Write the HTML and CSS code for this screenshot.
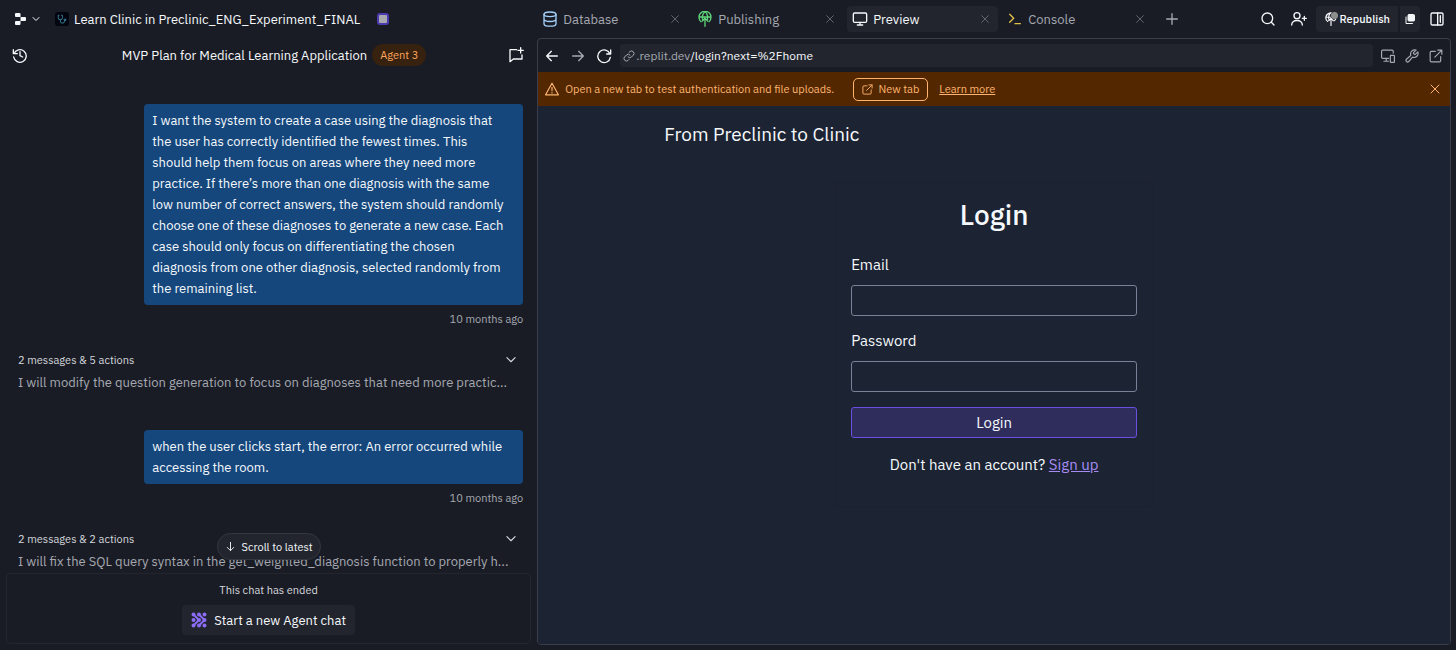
FILE: index.html
```html
<!DOCTYPE html>
<html lang="en">
<head>
    <meta charset="UTF-8">
    <title>Learn Clinic in Preclinic_ENG_Experiment_FINAL</title>
    <link rel="stylesheet" href="styles.css">
</head>
<body>
    <!-- Left side: project title and agent chat -->
    <section class="chat">
        <header class="topbar">
            <button class="icon-btn logo-btn" aria-label="Menu">
                <svg width="11" height="12" viewBox="0 0 11 12" fill="#f5f9fc"><path d="M1 0h3.5a1 1 0 0 1 1 1v3H1a1 1 0 0 1-1-1V1a1 1 0 0 1 1-1zM5.5 4H10a1 1 0 0 1 1 1v2a1 1 0 0 1-1 1H5.500zM1 8h4.500v3a1 1 0 0 1-1 1H1a1 1 0 0 1-1-1V9a1 1 0 0 1 1-1z"/></svg>
                <svg width="12" height="12" viewBox="0 0 24 24" class="line"><path d="M6 9l6 6 6-6"/></svg>
            </button>
            <span class="app-icon">
                <svg width="10" height="10" viewBox="0 0 24 24" class="line cyan"><path d="M5 3H3v6a5 5 0 0 0 10 0V3h-2M8 14v3a5 5 0 0 0 10 0v-1"/><circle cx="19" cy="14" r="2"/></svg>
            </span>
            <h1 class="app-name">Learn Clinic in Preclinic_ENG_Experiment_FINAL</h1>
            <span class="status-dot"></span>
        </header>

        <div class="chat-head">
            <button class="icon-btn" aria-label="History">
                <svg width="16" height="16" viewBox="0 0 24 24" class="line"><path d="M2 4v6h6M3 10a9.500 9.500 0 1 1-.5 5M12 7v6l4 2"/></svg>
            </button>
            <div class="chat-title">
                <h2>MVP Plan for Medical Learning Application</h2>
                <span class="badge">Agent 3</span>
            </div>
            <button class="icon-btn" aria-label="New chat">
                <svg width="16" height="16" viewBox="0 0 24 24" class="line"><path d="M13 4H3v18l5-4h13v-6M19 1v8M15 5h8"/></svg>
            </button>
        </div>

        <div class="messages">
            <div class="bubble">I want the system to create a case using the diagnosis that the user has correctly identified the fewest times. This should help them focus on areas where they need more practice. If there’s more than one diagnosis with the same low number of correct answers, the system should randomly choose one of these diagnoses to generate a new case. Each case should only focus on differentiating the chosen diagnosis from one other diagnosis, selected randomly from the remaining list.</div>
            <time class="time">10 months ago</time>
            <button class="group">
                <span class="group-head">2 messages &amp; 5 actions
                    <svg width="14" height="14" viewBox="0 0 24 24" class="line"><path d="M5 8l7 7 7-7"/></svg>
                </span>
                <span class="group-text">I will modify the question generation to focus on diagnoses that need more practic...</span>
            </button>
            <div class="bubble">when the user clicks start, the error: An error occurred while accessing the room.</div>
            <time class="time">10 months ago</time>
            <button class="group">
                <span class="group-head">2 messages &amp; 2 actions
                    <svg width="14" height="14" viewBox="0 0 24 24" class="line"><path d="M5 8l7 7 7-7"/></svg>
                </span>
                <span class="group-text">I will fix the SQL query syntax in the get_weighted_diagnosis function to properly h...</span>
            </button>
        </div>

        <footer class="ended">
            <button class="scroll-btn">
                <svg width="11" height="11" viewBox="0 0 24 24" class="line"><path d="M12 3v18M5 14l7 7 7-7"/></svg>
                Scroll to latest
            </button>
            <p>This chat has ended</p>
            <button class="start-btn">
                <svg width="16" height="16" viewBox="0 0 16 16"><g fill="#8b6cf5"><circle cx="2.500" cy="2.500" r="2"/><circle cx="8" cy="2.500" r="2"/><circle cx="13.500" cy="2.500" r="2"/><circle cx="2.500" cy="8" r="2"/><circle cx="8" cy="8" r="2"/><circle cx="13.500" cy="8" r="2"/><circle cx="2.500" cy="13.500" r="2"/><circle cx="8" cy="13.500" r="2"/><circle cx="13.500" cy="13.500" r="2"/></g><path d="M2.500 2.500L8 8l-5.500 5.500M8 2.500L13.500 8 8 13.500" fill="none" stroke="#8b6cf5" stroke-width="2"/></svg>
                Start a new Agent chat
            </button>
        </footer>
    </section>

    <!-- Right side: tabs and preview -->
    <section class="workspace">
        <nav class="tabs">
            <div class="tab">
                <svg width="16" height="16" viewBox="0 0 24 24" class="line blue"><ellipse cx="12" cy="5" rx="9" ry="3.500"/><path d="M3 5v14c0 5 18 5 18 0V5M3 12c0 5 18 5 18 0"/></svg>
                <span>Database</span>
                <button class="close" aria-label="Close Database"><svg width="10" height="10" viewBox="0 0 24 24" class="line"><path d="M4 4l16 16M20 4L4 20"/></svg></button>
            </div>
            <div class="tab">
                <svg width="16" height="16" viewBox="0 0 24 24" class="line green"><path d="M6 16a9 9 0 1 1 12 0M3 9h18M9 14c-2-4-1-10 3-13 4 3 5 9 3 13M12 11v12M8 15l4-4 4 4"/></svg>
                <span>Publishing</span>
                <button class="close" aria-label="Close Publishing"><svg width="10" height="10" viewBox="0 0 24 24" class="line"><path d="M4 4l16 16M20 4L4 20"/></svg></button>
            </div>
            <div class="tab active">
                <svg width="16" height="16" viewBox="0 0 24 24" class="line"><rect x="2" y="3" width="20" height="14" rx="2"/><path d="M12 17v4M8 21h8"/></svg>
                <span>Preview</span>
                <button class="close" aria-label="Close Preview"><svg width="10" height="10" viewBox="0 0 24 24" class="line"><path d="M4 4l16 16M20 4L4 20"/></svg></button>
            </div>
            <div class="tab">
                <svg width="16" height="16" viewBox="0 0 24 24" class="line yellow"><path d="M4 5l6 6-6 6M12 19h8"/></svg>
                <span>Console</span>
                <button class="close" aria-label="Close Console"><svg width="10" height="10" viewBox="0 0 24 24" class="line"><path d="M4 4l16 16M20 4L4 20"/></svg></button>
            </div>
            <button class="icon-btn add" aria-label="New tab"><svg width="16" height="16" viewBox="0 0 24 24" class="line"><path d="M12 4v16M4 12h16"/></svg></button>
            <div class="tools">
                <div class="people">
                    <button class="icon-btn" aria-label="Search"><svg width="16" height="16" viewBox="0 0 24 24" class="line"><circle cx="11" cy="11" r="8"/><path d="M17 17l4 4"/></svg></button>
                    <button class="icon-btn" aria-label="Invite"><svg width="16" height="16" viewBox="0 0 24 24" class="line"><circle cx="9" cy="7" r="4.500"/><path d="M1 21c0-9 16-9 16 0M20 8v6M17 11h6"/></svg></button>
                </div>
                <div class="publish">
                    <button class="republish">
                        <svg width="14" height="14" viewBox="0 0 24 24" class="line"><path d="M6 16a8 8 0 0 1 4-14M3 9h8M9 14c-2-4-1-10 3-13M12 11v12M8 15l4-4 4 4M18 15l2-3"/><circle cx="18" cy="6" r="5" fill="#8d8f8e" stroke="#8d8f8e"/></svg>
                        Republish
                    </button>
                    <button class="copies" aria-label="Deployments"><svg width="12" height="12" viewBox="0 0 24 24" class="line"><path d="M4 8v13h13"/><rect x="8" y="3" width="13" height="13" rx="2" fill="#f5f9fc"/></svg></button>
                </div>
                <button class="icon-btn" aria-label="Toggle sidebar"><svg width="16" height="16" viewBox="0 0 24 24" class="line"><rect x="3" y="3" width="18" height="18" rx="2"/><path d="M13 3v18M17 7v10"/></svg></button>
            </div>
        </nav>

        <div class="preview">
            <div class="browser-bar">
                <div class="history">
                    <button class="icon-btn" aria-label="Back"><svg width="16" height="16" viewBox="0 0 24 24" class="line"><path d="M20 12H4M11 5l-7 7 7 7"/></svg></button>
                    <button class="icon-btn dim" aria-label="Forward"><svg width="16" height="16" viewBox="0 0 24 24" class="line"><path d="M4 12h16M13 5l7 7-7 7"/></svg></button>
                    <button class="icon-btn" aria-label="Reload"><svg width="16" height="16" viewBox="0 0 24 24" class="line"><path d="M22 3v6h-6M21 9a9.500 9.500 0 1 0 .5 5"/></svg></button>
                </div>
                <div class="address">
                    <svg width="12" height="12" viewBox="0 0 24 24" class="line"><path d="M10 14a5 5 0 0 0 7 0l4-4a5 5 0 0 0-7-7l-2 2M14 10a5 5 0 0 0-7 0l-4 4a5 5 0 0 0 7 7l2-2"/></svg>
                    <span>.replit.dev<b>/login?next=%2Fhome</b></span>
                </div>
                <div class="page-tools">
                    <button class="icon-btn dim" aria-label="Devices"><svg width="14" height="14" viewBox="0 0 24 24" class="line"><path d="M13 16H3a2 2 0 0 1-2-2V4a2 2 0 0 1 2-2h16a2 2 0 0 1 2 2v3M9 16v5M5 21h8"/><rect x="16" y="11" width="7" height="12" rx="1"/></svg></button>
                    <button class="icon-btn dim" aria-label="Developer tools"><svg width="14" height="14" viewBox="0 0 24 24" class="line"><path d="M14.700 6.300a1 1 0 0 0 0 1.400l1.600 1.600a1 1 0 0 0 1.400 0L22 5a7 7 0 0 1-9 9l-7 8a3 3 0 0 1-4-4l8-7a7 7 0 0 1 9-9z"/></svg></button>
                    <button class="icon-btn dim" aria-label="Open in new tab"><svg width="14" height="14" viewBox="0 0 24 24" class="line"><path d="M11 4H4a2 2 0 0 0-2 2v14a2 2 0 0 0 2 2h14a2 2 0 0 0 2-2v-7M15 2h7v7M22 2L10 14"/></svg></button>
                </div>
            </div>

            <div class="banner">
                <svg width="14" height="14" viewBox="0 0 24 24" class="line"><path d="M12 2L1 22h22zM12 9v6M12 18v1"/></svg>
                <span>Open a new tab to test authentication and file uploads.</span>
                <button class="new-tab"><svg width="11" height="11" viewBox="0 0 24 24" class="line"><path d="M11 4H4a2 2 0 0 0-2 2v14a2 2 0 0 0 2 2h14a2 2 0 0 0 2-2v-7M15 2h7v7M22 2L10 14"/></svg>New tab</button>
                <a href="#">Learn more</a>
                <button class="dismiss" aria-label="Dismiss"><svg width="12" height="12" viewBox="0 0 24 24" class="line"><path d="M4 4l16 16M20 4L4 20"/></svg></button>
            </div>

            <main class="site">
                <p class="brand">From Preclinic to Clinic</p>
                <form class="login">
                    <h2>Login</h2>
                    <label for="email">Email</label>
                    <input type="email" id="email">
                    <label for="password">Password</label>
                    <input type="password" id="password">
                    <button type="submit">Login</button>
                    <p>Don't have an account? <a href="#">Sign up</a></p>
                </form>
            </main>
        </div>
    </section>
</body>
</html>
```
FILE: styles.css
```css
* {
    box-sizing: border-box;
}
body {
    margin: 0;
    height: 100vh;
    display: flex;
    background: #1a1c25;
    color: #f5f9fc;
    font-family: "IBM Plex Sans", Inter, "Noto Sans", sans-serif;
    font-size: 13px;
    overflow: hidden;
}
h1, h2, p {
    margin: 0;
    font-weight: 400;
}
button {
    font: inherit;
    color: inherit;
    background: none;
    border: none;
    padding: 0;
    cursor: pointer;
}
svg {
    flex: none;
    display: block;
}
.line {
    fill: none;
    stroke: currentColor;
    stroke-width: 2;
    stroke-linecap: round;
    stroke-linejoin: round;
}
.icon-btn {
    display: flex;
    align-items: center;
}
.dim {
    color: #a5a9b1;
}
.cyan { color: #3f93ab; }
.blue { color: #a3d0fa; }
.green { color: #5fd27a; }
.yellow { color: #e0c04c; }

/* chat column */
.chat {
    width: 36.9%;
    flex: none;
    display: flex;
    flex-direction: column;
    padding: 0 6px 6px 6px;
}
.topbar {
    height: 38px;
    flex: none;
    display: flex;
    align-items: center;
    padding-left: 9px;
}
.logo-btn {
    gap: 4px;
    margin-right: 13px;
}
.app-icon {
    width: 14px;
    height: 14px;
    display: flex;
    align-items: center;
    justify-content: center;
    border-radius: 3px;
    background: #020410;
    margin-right: 5px;
}
.app-name {
    font-size: 13px;
}
.status-dot {
    width: 12px;
    height: 12px;
    margin-left: 17px;
    border: 2px solid #4c3bb0;
    border-radius: 3px;
    background: #a9a9b0;
}
.chat-head {
    height: 34px;
    flex: none;
    display: flex;
    align-items: center;
    justify-content: space-between;
    padding: 0 7px 0 6px;
}
.chat-title {
    display: flex;
    align-items: center;
    gap: 5px;
    padding-left: 12px;
}
.chat-title h2 {
    font-size: 13px;
}
.badge {
    padding: 0 8px;
    line-height: 22px;
    border-radius: 12px;
    background: #37210f;
    color: #ffa65c;
    font-size: 11px;
}
.messages {
    flex: 1;
    min-height: 0;
    overflow: hidden;
    display: flex;
    flex-direction: column;
    padding: 32px 8px 0 12px;
}
.bubble {
    align-self: flex-end;
    flex: none;
    width: 379px;
    padding: 6px 15px 6px 8px;
    border-radius: 4px;
    background: #15477c;
    line-height: 21px;
}
.time {
    align-self: flex-end;
    margin-top: 6px;
    line-height: 16px;
    font-size: 11px;
    color: #a5a9b1;
}
.group {
    margin: 22px 0 35px;
    text-align: left;
}
.group-head {
    display: flex;
    align-items: center;
    justify-content: space-between;
    padding-right: 5px;
    font-size: 11px;
    line-height: 22px;
    color: #d5d8dd;
}
.group-text {
    display: block;
    overflow: hidden;
    white-space: nowrap;
    text-overflow: ellipsis;
    line-height: 24px;
    color: #a5a9b1;
}
.ended {
    position: relative;
    flex: none;
    display: flex;
    flex-direction: column;
    align-items: center;
    gap: 7px;
    padding: 8px 0;
    border: 1px solid #23252f;
    border-radius: 4px;
}
.ended p {
    font-size: 11px;
    line-height: 16px;
    color: #d5d8dd;
}
.scroll-btn {
    position: absolute;
    bottom: 100%;
    margin-bottom: 14px;
    height: 27px;
    display: flex;
    align-items: center;
    gap: 6px;
    padding: 0 7px;
    border: 1px solid #343742;
    border-radius: 14px;
    background: #23252e;
    font-size: 11px;
}
.start-btn {
    display: flex;
    align-items: center;
    gap: 7px;
    height: 30px;
    padding: 0 9px;
    border-radius: 4px;
    background: #23252e;
}

/* workspace column */
.workspace {
    flex: 1;
    min-width: 0;
    display: flex;
    flex-direction: column;
    padding: 0 5px 5px 0;
}
.tabs {
    height: 38px;
    flex: none;
    display: flex;
    align-items: center;
    gap: 4px;
}
.tab {
    width: 151px;
    height: 26px;
    display: flex;
    align-items: center;
    gap: 5px;
    padding: 0 8px 0 5px;
    border-radius: 4px;
    color: #a5a9b1;
}
.tab.active {
    background: #23252e;
    color: #f5f9fc;
}
.close {
    margin-left: auto;
    color: #70747d;
}
.add {
    margin-left: 7px;
    color: #a5a9b1;
}
.tools {
    margin-left: auto;
    display: flex;
    align-items: center;
    gap: 9px;
    padding-right: 6px;
}
.people {
    display: flex;
    gap: 15px;
}
.publish {
    display: flex;
    gap: 2px;
}
.republish,
.copies {
    height: 26px;
    display: flex;
    align-items: center;
    gap: 2px;
    padding: 0 8px;
    border-radius: 4px 0 0 4px;
    background: #23252e;
    font-size: 11px;
    font-weight: 500;
}
.copies {
    padding: 0 4px;
    border-radius: 0 4px 4px 0;
}
.preview {
    flex: 1;
    min-height: 0;
    display: flex;
    flex-direction: column;
    border: 1px solid #3a3e4a;
    border-radius: 4px;
    overflow: hidden;
}
.browser-bar {
    height: 33px;
    flex: none;
    display: flex;
    align-items: center;
    gap: 8px;
    padding: 0 7px 0 6px;
}
.history,
.page-tools {
    display: flex;
    gap: 10px;
}
.address {
    flex: 1;
    height: 23px;
    display: flex;
    align-items: center;
    gap: 1px;
    padding: 0 3px;
    border-radius: 4px;
    background: #23252e;
    font-size: 12px;
    color: #a5a9b1;
}
.address b {
    font-weight: 400;
    color: #f5f9fc;
}
.banner {
    height: 34px;
    flex: none;
    display: flex;
    align-items: center;
    padding: 0 9px 0 7px;
    background: #532800;
    color: #ffb571;
    font-size: 11px;
}
.banner span {
    margin: 0 19px 0 6px;
}
.banner a {
    margin-left: 11px;
    color: inherit;
}
.new-tab {
    display: flex;
    align-items: center;
    gap: 5px;
    height: 23px;
    padding: 0 8px;
    border: 1px solid #ffb571;
    border-radius: 5px;
}
.dismiss {
    margin-left: auto;
}

/* previewed login page */
.site {
    flex: 1;
    background: #1c2333;
    padding: 13px 126px 0;
}
.brand {
    font-size: 19px;
    line-height: 30px;
}
.login {
    width: 318px;
    margin: 33px auto 0;
    padding: 14px 15px;
    display: flex;
    flex-direction: column;
    border: 1px solid #1b2130;
    border-radius: 4px;
    font-size: 15px;
}
.login h2 {
    margin-bottom: 22px;
    font-size: 28px;
    line-height: 36px;
    font-weight: 500;
    text-align: center;
}
.login label {
    line-height: 20px;
    margin-bottom: 10px;
}
.login input {
    height: 31px;
    margin-bottom: 15px;
    padding: 4px 8px;
    border: 1px solid #788196;
    border-radius: 3px;
    background: transparent;
    color: inherit;
    font: inherit;
}
.login button {
    height: 31px;
    border: 1px solid #6a4fe0;
    border-radius: 3px;
    background: #2f2d5c;
}
.login p {
    margin: 16px 0;
    line-height: 22px;
    text-align: center;
}
.login a {
    color: #a78bf5;
}
```
